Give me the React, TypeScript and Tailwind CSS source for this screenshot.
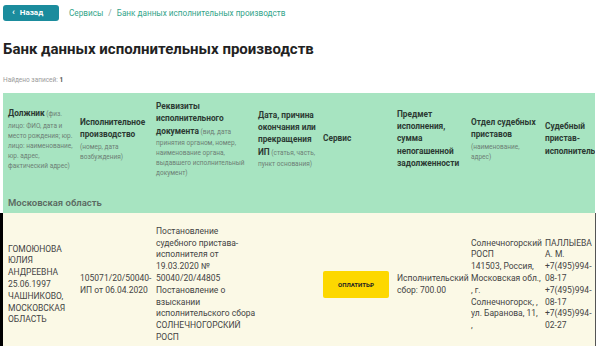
import { ReactNode } from "react";

// Column widths of the scrolling table (last one is clipped by the wrapper)
const COLS = "grid grid-cols-[72px_76px_102px_65px_74px_74px_74px_74px] w-max";

// Header lines: [bold part, small note part]
type Line = [string, string?];

const HEAD: Line[][] = [
  [["Должник", " (физ."], ["", "лицо: ФИО, дата и"], ["", "место рождения; юр."], ["", "лицо: наименование,"], ["", "юр. адрес,"], ["", "фактический адрес)"]],
  [["Исполнительное"], ["производство"], ["", "(номер, дата"], ["", "возбуждения)"]],
  [["Реквизиты"], ["исполнительного"], ["документа", " (вид, дата"], ["", "принятия органом, номер,"], ["", "наименование органа,"], ["", "выдавшего исполнительный"], ["", "документ)"]],
  [["Дата, причина"], ["окончания или"], ["прекращения"], ["ИП", " (статья, часть,"], ["", "пункт основания)"]],
  [["Сервис"]],
  [["Предмет"], ["исполнения,"], ["сумма"], ["непогашенной"], ["задолженности"]],
  [["Отдел судебных"], ["приставов"], ["", "(наименование,"], ["", "адрес)"]],
  [["Судебный"], ["пристав-"], ["исполнитель"]],
];

const ROW: string[][] = [
  ["ГОМОЮНОВА", "ЮЛИЯ", "АНДРЕЕВНА", "25.06.1997", "ЧАШНИКОВО,", "МОСКОВСКАЯ", "ОБЛАСТЬ"],
  ["105071/20/50040-", "ИП от 06.04.2020"],
  [
    "Постановление",
    "судебного пристава-",
    "исполнителя от",
    "19.03.2020 №",
    "50040/20/44805",
    "Постановление о",
    "взыскании",
    "исполнительского сбора",
    "СОЛНЕЧНОГОРСКИЙ",
    "РОСП",
  ],
  [],
  [],
  ["Исполнительский", "сбор: 700.00"],
  ["Солнечногорский", "РОСП", "141503, Россия,", "Московская обл.,", ", г.", "Солнечногорск, ,", "ул. Баранова, 11,", ","],
  ["ПАЛЛЫЕВА", "А. М.", "+7(495)994-", "08-17", "+7(495)994-", "08-17", "+7(495)994-", "02-27"],
];

function Cell({ children }: { children: ReactNode }) {
  return <div className="flex items-center pl-[5px] pr-[3px]">{children}</div>;
}

export default function App() {
  return (
    <div
      className="w-[600px] h-[346px] overflow-hidden bg-white"
      style={{ fontFamily: "Roboto, 'Noto Sans', sans-serif" }}
    >
      {/* Top bar: back button + breadcrumbs */}
      <div className="flex items-center gap-[10px] pl-[3px] pt-[5px]">
        <button className="flex items-center gap-[5px] h-[16px] w-[56px] pl-[9px] rounded-[3px] bg-[#1b8c9d] text-white text-[8px] font-bold">
          <span className="text-[9px] leading-none -mt-px">‹</span>
          Назад
        </button>
        <nav className="flex items-center gap-[5px] text-[8.2px] text-[#33a48a]">
          <span>Сервисы</span>
          <span className="text-[#8a9a94]">/</span>
          <span>Банк данных исполнительных производств</span>
        </nav>
      </div>

      <h1 className="mt-[19px] pl-[3px] text-[15px] leading-[18px] font-bold text-[#222]">
        Банк данных исполнительных производств
      </h1>

      <p className="mt-[18px] pl-[3px] text-[6.5px] leading-[8px] text-[#9a9a9a]">
        Найдено записей: <span className="font-bold text-[#555]">1</span>
      </p>

      {/* Table header */}
      <div className="mt-[9px] flex">
        <div className="w-[3px] shrink-0" />
        <div className="w-[592px] shrink-0 overflow-hidden bg-[#a7e4c1]">
          <div className={`${COLS} pt-[8px] pb-[9px]`}>
            {HEAD.map((lines, i) => (
              <Cell key={i}>
                <div className="whitespace-nowrap text-[6.5px] text-[#6d7f75]">
                  {lines.map(([b, s], j) => (
                    <div key={j} className={b ? "leading-[11.3px]" : "leading-[10px]"}>
                      {b && <span className="text-[8.3px] font-bold text-[#2c3a33]">{b}</span>}
                      {s}
                    </div>
                  ))}
                </div>
              </Cell>
            ))}
          </div>
          <div className="pl-[5px] pt-[10px] pb-[5px] text-[9.5px] leading-[11px] font-semibold text-[#5b6b62]">
            Московская область
          </div>
        </div>
      </div>

      {/* Data row */}
      <div className="flex">
        <div className="w-[3px] shrink-0 bg-black" />
        <div className="w-[592px] shrink-0 overflow-hidden bg-[#fbf9e6]">
          <div className={`${COLS} pt-[13px] pb-[13px] text-[8.5px] leading-[11.8px] text-[#444]`}>
            {ROW.map((lines, i) => (
              <Cell key={i}>
                {i === 4 ? (
                  <button className="w-[69px] h-[27px] rounded-[2px] bg-[#fdd800] text-[6px] font-bold text-[#222]">
                    ОПЛАТИТЬ₽
                  </button>
                ) : (
                  <div className="whitespace-nowrap">
                    {lines.map((l, j) => (
                      <div key={j}>{l}</div>
                    ))}
                  </div>
                )}
              </Cell>
            ))}
          </div>
        </div>
        <div className="w-px shrink-0 bg-[#555]" />
      </div>
    </div>
  );
}
